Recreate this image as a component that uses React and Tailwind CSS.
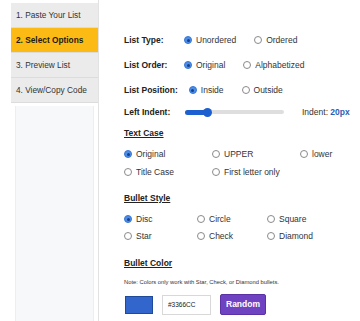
import React from "react"

const font = { fontFamily: '"Liberation Sans", Arial, sans-serif' }

function Radio({ checked }) {
    return checked ? (
        <span className="w-[8px] h-[8px] rounded-full bg-[#4d8de6] border border-[#3a78d4] flex items-center justify-center shrink-0">
            <span className="w-[3px] h-[3px] rounded-full bg-[#173f8a]" />
        </span>
    ) : (
        <span className="w-[8px] h-[8px] rounded-full bg-white border border-[#8a8a8a] shrink-0" />
    )
}

function Option({ checked, label, className = "" }) {
    return (
        <span className={`flex items-center gap-[4px] text-[8.5px] text-[#333] ${className}`}>
            <Radio checked={checked} />
            <span>{label}</span>
        </span>
    )
}

function Row({ label, options, className = "" }) {
    return (
        <div className={`flex items-center h-[14px] ${className}`}>
            <span className="min-w-[49px] mr-[11px] font-bold text-[8.5px] text-[#222]">{label}</span>
            {options.map((o) => (
                <Option key={o.label} checked={o.checked} label={o.label} className="mr-[18px]" />
            ))}
        </div>
    )
}

const tabs = ["1. Paste Your List", "2. Select Options", "3. Preview List", "4. View/Copy Code"]

export default function App() {
    return (
        <div className="flex w-[360px] h-[321px] bg-white overflow-hidden" style={font}>
            {/* sidebar */}
            <div className="ml-[11px] w-[88px] h-full pt-[3px] flex flex-col border-r border-[#e2e2e2] bg-white">
                {tabs.map((t, i) => (
                    <div
                        key={t}
                        className={`h-[25px] flex items-center pl-[5px] text-[8.3px] border-b border-[#dcdcdc] ${
                            i === 1 ? "bg-[#fcbb14] font-bold text-[#1a1a1a]" : "bg-[#ebebeb] text-[#333]"
                        }`}
                    >
                        {t}
                    </div>
                ))}
                <div className="flex-1 mx-[4px] mt-[3px] bg-[#f7f8f9] border-l border-r border-[#eeeeee]" />
            </div>

            {/* main */}
            <div className="flex-1 pl-[25px] flex flex-col">
                <Row
                    className="mt-[33px]"
                    label="List Type:"
                    options={[{ label: "Unordered", checked: true }, { label: "Ordered" }]}
                />
                <Row
                    className="mt-[11px]"
                    label="List Order:"
                    options={[{ label: "Original", checked: true }, { label: "Alphabetized" }]}
                />
                <Row
                    className="mt-[11px]"
                    label="List Position:"
                    options={[{ label: "Inside", checked: true }, { label: "Outside" }]}
                />

                {/* indent slider */}
                <div className="flex items-center h-[14px] mt-[8px]">
                    <span className="w-[61px] font-bold text-[8.5px] text-[#222]">Left Indent:</span>
                    <div className="relative w-[99px] h-[4px] rounded-full bg-[#dedede]">
                        <div className="absolute left-0 top-[-0.5px] w-[23px] h-[5px] rounded-full bg-[#1c5fd0]" />
                        <div className="absolute left-[18px] top-[-2.5px] w-[9px] h-[9px] rounded-full bg-[#1c5fd0]" />
                    </div>
                    <span className="ml-[18px] text-[8.5px] text-[#333]">
                        Indent: <span className="font-bold text-[#1f5fb8]">20px</span>
                    </span>
                </div>

                <div className="h-[14px] flex items-center mt-[7px] font-bold underline text-[8.5px] text-[#222]">Text Case</div>
                <div className="flex items-center h-[14px] mt-[7px]">
                    <Option checked label="Original" className="w-[88px]" />
                    <Option label="UPPER" className="w-[88px]" />
                    <Option label="lower" />
                </div>
                <div className="flex items-center h-[14px] mt-[4px]">
                    <Option label="Title Case" className="w-[88px]" />
                    <Option label="First letter only" />
                </div>

                <div className="h-[14px] flex items-center mt-[12px] font-bold underline text-[8.5px] text-[#222]">Bullet Style</div>
                <div className="flex items-center h-[14px] mt-[7px]">
                    <Option checked label="Disc" className="w-[73px]" />
                    <Option label="Circle" className="w-[70px]" />
                    <Option label="Square" />
                </div>
                <div className="flex items-center h-[14px] mt-[3px]">
                    <Option label="Star" className="w-[73px]" />
                    <Option label="Check" className="w-[70px]" />
                    <Option label="Diamond" />
                </div>

                <div className="h-[14px] flex items-center mt-[13px] font-bold underline text-[8.5px] text-[#222]">Bullet Color</div>
                <div className="h-[14px] flex items-center mt-[5px] text-[5.8px] text-[#333] whitespace-nowrap">
                    Note: Colors only work with Star, Check, or Diamond bullets.
                </div>
                <div className="flex items-center mt-[5px] h-[21px]">
                    <div className="ml-[1px] w-[28px] h-[18px] bg-[#3366cc] border border-[#1f4a99]" />
                    <div className="ml-[9px] w-[49px] h-[20px] border border-[#d8d8d8] bg-white flex items-center pl-[5px] text-[6.5px] text-[#222]">
                        #3366CC
                    </div>
                    <div className="ml-[9px] w-[46px] h-[21px] rounded-[2px] bg-[#6f42c1] border border-[#5a32a6] flex items-center justify-center text-white font-bold text-[8.5px]">
                        Random
                    </div>
                </div>
            </div>
        </div>
    )
}
